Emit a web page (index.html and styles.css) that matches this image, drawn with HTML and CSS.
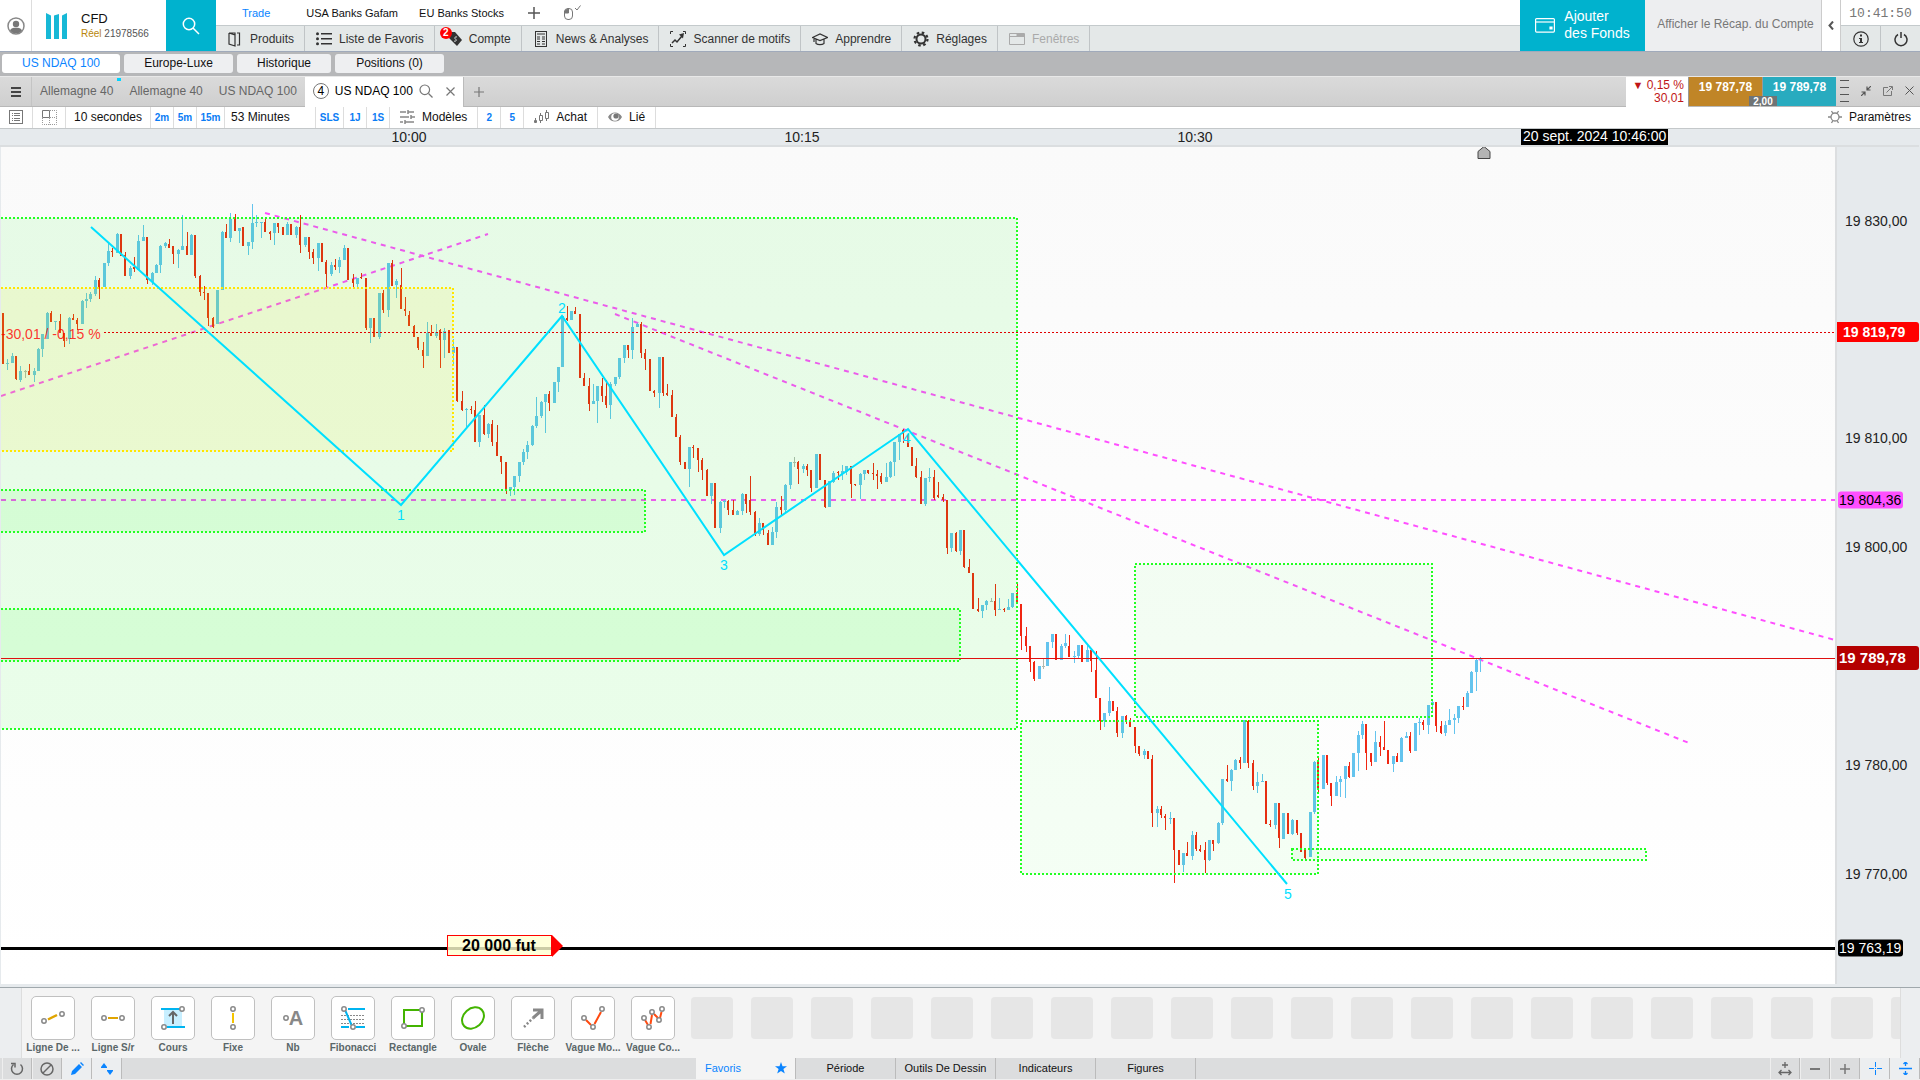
FILE: index.html
```html
<!DOCTYPE html>
<html lang="fr">
<head>
  <meta charset="UTF-8" />
  <meta name="viewport" content="width=device-width, initial-scale=1" />
  <title>CFD - US NDAQ 100</title>
  <link rel="stylesheet" href="styles.css">
</head>
<body>

  <header class="topbar">
    <button class="profile" aria-label="Profil">
      <svg width="18" height="18" viewBox="0 0 18 18"><circle cx="9" cy="9" r="8" fill="#fff" stroke="#888" stroke-width="1.5"/><circle cx="9" cy="7" r="3.2" fill="#777"/><path d="M3 13.5C4 11 6 10.800 9 10.800s5 .2 6 2.700C13.500 15.500 11.500 16.300 9 16.300S4.500 15.500 3 13.500z" fill="#777"/></svg>
    </button>
    <div class="account">
      <svg width="22" height="26" viewBox="0 0 22 26" fill="#17b8d6"><path d="M0 0l5 2.500V26H0zM8 2.500L13 1v25H8zM21 0l-5 2.500V26h5z"/></svg>
      <div>
        <div class="account-name">CFD</div>
        <div class="account-id"><span>Réel</span> 21978566</div>
      </div>
    </div>
    <button class="search-btn" aria-label="Rechercher">
      <svg width="18" height="18" viewBox="0 0 18 18" fill="none" stroke="#fff" stroke-width="1.500"><circle cx="7" cy="7" r="5.700"/><path d="M11 11l6 6"/></svg>
    </button>

    <div class="menus">
      <nav class="layouts">
        <a href="#" class="active">Trade</a>
        <a href="#">USA Banks Gafam</a>
        <a href="#">EU Banks Stocks</a>
        <button aria-label="Ajouter"><svg width="12" height="12" viewBox="0 0 12 12" stroke="#555" stroke-width="1.500"><path d="M6 0v12M0 6h12"/></svg></button>
        <button aria-label="Souris"><svg width="18" height="16" viewBox="0 0 18 16" fill="none" stroke="#777"><rect x="1.500" y="3.500" width="8" height="11" rx="3.500"/><path d="M5.500 3.500v4.500h-4V6z" fill="#777"/><path d="M12 3l2 2 3.500-4.500"/></svg></button>
      </nav>
      <nav class="main-nav">
        <a href="#"><svg width="16" height="16" viewBox="0 0 16 16" fill="none" stroke="#333" stroke-width="1.200"><path d="M2 2h6v11M2 2v11l6 2V4L2 2M10 2h2.500v12H10"/></svg>Produits</a>
        <a href="#"><svg width="16" height="16" viewBox="0 0 16 16" fill="#333"><path d="M5 2h11v1.500H5zM5 7h11v1.500H5zM5 12h11v1.500H5z"/><circle cx="1.500" cy="2.800" r="1.500"/><circle cx="1.500" cy="7.800" r="1.500"/><circle cx="1.500" cy="12.800" r="1.500"/></svg>Liste de Favoris</a>
        <a href="#" class="with-badge"><svg width="16" height="16" viewBox="0 0 16 16"><path d="M5 1h4l7 8-5 6-8-8z" fill="#333"/><path d="M11 6c-2-.5-3 1-1.500 2s.5 3-1.500 2" fill="none" stroke="#e4e8e8"/></svg><b class="badge">2</b>Compte</a>
        <a href="#"><svg width="16" height="16" viewBox="0 0 16 16" fill="none" stroke="#333"><rect x="2.500" y=".5" width="11" height="15"/><path d="M4 3h8M4 6h3M4 8h3M4 10.500h3M4 13h3M9 6h3M9 8h3M9 10.500h3M9 13h3" stroke-width="1.200"/></svg>News &amp; Analyses</a>
        <a href="#"><svg width="16" height="16" viewBox="0 0 16 16" fill="none" stroke="#333"><path d="M.5 3V.5H3M13 .5h2.500V3M.5 13v2.500H3M13 15.500h2.500V13" /><path d="M2 12l3-3 2 2 5-6" stroke-width="1.500"/><path d="M9 3.500l5-1.500-1 5.500z" fill="#333" stroke="none"/></svg>Scanner de motifs</a>
        <a href="#"><svg width="16" height="16" viewBox="0 0 16 16" fill="none" stroke="#333" stroke-width="1.200"><path d="M.5 6.500L8 3l7.500 3.500L8 9.500zM4 8v4.500c2 1.500 6 1.500 8 0V8M2 7v4"/></svg>Apprendre</a>
        <a href="#"><svg width="16" height="16" viewBox="0 0 16 16" fill="none" stroke="#333"><circle cx="8" cy="8" r="4.500" stroke-width="2"/><circle cx="8" cy="8" r="6.500" stroke-width="2.200" stroke-dasharray="2.550 2.550"/></svg>Réglages</a>
        <a href="#" class="disabled"><svg width="16" height="16" viewBox="0 0 16 16" fill="none" stroke="#aaa"><path d="M.5 2.500h15v11H.5zM.5 5.500h15"/><path d="M8 3h7v2H8z" fill="#aaa"/></svg>Fenêtres</a>
      </nav>
    </div>

    <button class="add-funds">
      <svg width="20" height="15" viewBox="0 0 20 15" fill="none" stroke="#fff" stroke-width="1.200"><rect x=".6" y=".6" width="18.800" height="13.500" rx="1"/><path d="M.6 4h18.800"/><path d="M15 9h2v2h-2z" fill="#fff"/></svg>
      <span>Ajouter<br>des Fonds</span>
    </button>
    <button class="summary">Afficher le Récap. du Compte</button>
    <button class="collapse" aria-label="Réduire"><svg width="6" height="9" viewBox="0 0 6 9" fill="none" stroke="#555" stroke-width="2"><path d="M5 .5L1.500 4.500 5 8.500"/></svg></button>
    <div class="system">
      <time class="clock">10:41:50</time>
      <div class="system-btns">
        <button aria-label="Informations"><svg width="16" height="16" viewBox="0 0 16 16"><circle cx="8" cy="8" r="7.200" fill="none" stroke="#333" stroke-width="1.200"/><path d="M7 3.500h2v2H7zM6 7h3v4h1v1H6v-1h1V8H6z" fill="#333"/></svg></button>
        <button aria-label="Déconnexion"><svg width="14" height="16" viewBox="0 0 14 16" fill="none" stroke="#333" stroke-width="1.500"><path d="M4 3.500a6 6 0 1 0 6 0M7 1v6"/></svg></button>
      </div>
    </div>
  </header>

  <nav class="workspaces">
    <a href="#" class="active ws-a">US NDAQ 100</a>
    <a href="#" class="ws-b">Europe-Luxe</a>
    <a href="#" class="ws-c">Historique</a>
    <a href="#" class="ws-b">Positions (0)</a>
  </nav>

  <div class="tabs">
    <button class="burger" aria-label="Menu"><svg width="10" height="10" viewBox="0 0 10 10" stroke="#444" stroke-width="2"><path d="M0 1h10M0 5h10M0 9h10"/></svg></button>
    <a href="#" class="tab marked">Allemagne 40</a>
    <a href="#" class="tab">Allemagne 40</a>
    <a href="#" class="tab">US NDAQ 100</a>
    <div class="tab current">
      <span class="count">4</span>US NDAQ 100
      <svg width="14" height="14" viewBox="0 0 14 14" fill="none" stroke="#777" stroke-width="1.200"><circle cx="5.800" cy="5.800" r="4.800"/><path d="M9.500 9.500l4 4"/></svg>
      <button aria-label="Fermer"><svg width="9" height="9" viewBox="0 0 9 9" stroke="#777" stroke-width="1.200"><path d="M.5.5l8 8M8.500.5l-8 8"/></svg></button>
    </div>
    <button class="new-tab" aria-label="Nouvel onglet"><svg width="10" height="10" viewBox="0 0 10 10" stroke="#777" stroke-width="1.200"><path d="M5 0v10M0 5h10"/></svg></button>
    <div class="quote">
      <div class="change"><span>▼</span> 0,15 %<br>30,01</div>
      <button class="sell">19 787,78</button>
      <button class="buy">19 789,78</button>
      <span class="spread">2,00</span>
    </div>
    <div class="window-btns">
      <svg width="9" height="22" viewBox="0 0 9 22" stroke="#555"><path d="M0 .5h9M0 7.500h9M0 14.500h9M0 21.500h9"/></svg>
      <button aria-label="Réduire"><svg width="10" height="10" viewBox="0 0 10 10" fill="none" stroke="#555" stroke-width="1.200"><path d="M10 0L6 4M6 .5V4h3.500M0 10l4-4M.5 6H4v3.500"/></svg></button>
      <button aria-label="Détacher"><svg width="10" height="10" viewBox="0 0 10 10" fill="none" stroke="#777"><path d="M5 1.500H.5v8h8V5M3.500 6.500L9 1M6 .5h3.500V4"/></svg></button>
      <button aria-label="Fermer"><svg width="9" height="9" viewBox="0 0 9 9" stroke="#555"><path d="M.5.5l8 8M8.500.5l-8 8"/></svg></button>
    </div>
  </div>

  <div class="toolbar">
    <button class="w-32" aria-label="Liste"><svg width="14" height="14" viewBox="0 0 14 14" fill="none" stroke="#777"><rect x=".5" y=".5" width="13" height="13"/><path d="M3 3.500h1M3 5.500h1M3 8.500h1M3 10.500h1M5 3.500h6M5 5.500h6M5 8.500h6M5 10.500h6"/></svg></button>
    <button class="w-32" aria-label="Grille"><svg width="15" height="15" viewBox="0 0 15 15" fill="none" stroke="#999"><path d="M.5.5h7v7h-7z" stroke="#777"/><path d="M8 .5h6.500v14H.5V8M8 7.500h6.500M7.500 8v6.500" stroke-dasharray="1 1"/></svg></button>
    <button class="period">10 secondes</button>
    <button class="short">2m</button>
    <button class="short">5m</button>
    <button class="short w-28">15m</button>
    <button class="period wide">53 Minutes</button>
    <button class="short w-28">SLS</button>
    <button class="short">1J</button>
    <button class="short">1S</button>
    <button class="tool"><svg width="15" height="14" viewBox="0 0 15 14" stroke="#888" stroke-width="1.500"><path d="M0 2h6M8 2h6M8 0v4M0 7h9M11 7h4M11 5v4M0 12h3M5 12h9M5 10v4"/></svg>Modèles</button>
    <button class="short">2</button>
    <button class="short">5</button>
    <button class="tool"><svg width="15" height="14" viewBox="0 0 15 14" fill="none" stroke="#777"><path d="M1.500 8v5M.5 10.500h2v2h-2zM6.500 3v2M6.500 11v2M5.500 5.500h3v5h-3zM12.500 0v2M12.500 9v2M11.500 2.500h3v6h-3z"/></svg>Achat</button>
    <button class="tool"><svg width="14" height="12" viewBox="0 0 14 12"><path d="M0 6c3-6 11-6 14 0-3 6-11 6-14 0z" fill="#888"/><circle cx="7" cy="6" r="3.800" fill="#fff"/><circle cx="8" cy="5" r="2.600" fill="#777"/></svg>Lié</button>
    <button class="settings"><svg width="14" height="14" viewBox="0 0 14 14" fill="none" stroke="#888" stroke-width="1.300"><circle cx="7" cy="7" r="4"/><path d="M0 7h3M11 7h3M3.500 1l1.500 2.500M10.500 1L9 3.500M3.500 13L5 10.500M10.500 13L9 10.500"/></svg>Paramètres</button>
  </div>

  <main class="chart">
    <svg id="time-axis" class="time-axis"></svg>
    <svg id="plot" class="plot"></svg>
    <svg id="price-axis" class="price-axis"></svg>
  </main>

  <section class="drawing-tools">
    <button class="draw-tool"><span><svg width="34" height="34" viewBox="0 0 34 34" fill="none" stroke="#888" stroke-width="1.500"><path d="M12 18.500l9-4.500" stroke="#e0a400" stroke-width="2.500"/><circle cx="8" cy="20" r="2.200"/><circle cx="26" cy="13" r="2.200"/></svg></span>Ligne De ...</button>
    <button class="draw-tool"><span><svg width="34" height="34" viewBox="0 0 34 34" fill="none" stroke="#888" stroke-width="1.500"><path d="M12 17h10" stroke="#e0a400" stroke-width="2"/><circle cx="8" cy="17" r="2.200"/><circle cx="26" cy="17" r="2.200"/></svg></span>Ligne S/r</button>
    <button class="draw-tool"><span><svg width="34" height="34" viewBox="0 0 34 34" fill="none" stroke="#888" stroke-width="1.500"><path d="M8 8h18v18H8z" fill="#c8efff" stroke="none"/><path d="M5 8h19M11 26h18" stroke="#00b4f0" stroke-width="2"/><path d="M17 23V11M13 15l4-4 4 4" stroke="#666" stroke-width="2"/><circle cx="26" cy="8" r="2.200" fill="#fff"/><circle cx="8" cy="26" r="2.200" fill="#fff"/></svg></span>Cours</button>
    <button class="draw-tool"><span><svg width="34" height="34" viewBox="0 0 34 34" fill="none" stroke="#888" stroke-width="1.500"><path d="M17 12v10" stroke="#f5c400" stroke-width="2"/><circle cx="17" cy="8" r="2.200"/><circle cx="17" cy="26" r="2.200"/></svg></span>Fixe</button>
    <button class="draw-tool"><span class="letter"><svg width="6" height="6" viewBox="0 0 6 6" fill="none" stroke="#888" stroke-width="1.500"><circle cx="3" cy="3" r="2.200"/></svg>A</span>Nb</button>
    <button class="draw-tool"><span><svg width="34" height="34" viewBox="0 0 34 34" fill="none" stroke="#888" stroke-width="1.500"><path d="M11 14.500h18M5 18.500h24M5 22.500h24M5 14.500h5" stroke-width="1" stroke-dasharray="2 1"/><path d="M12 8h17M5 26h8M20 26h9M9.500 10l6 14" stroke="#00b4f0" stroke-width="2"/><circle cx="8" cy="8" r="2.200"/><circle cx="17" cy="26" r="2.200"/></svg></span>Fibonacci</button>
    <button class="draw-tool"><span><svg width="34" height="34" viewBox="0 0 34 34" fill="none" stroke="#888" stroke-width="1.500"><path d="M8 9h18v16H8z" stroke="#43b400" stroke-width="2"/><circle cx="26" cy="9" r="2.200" fill="#fff"/><circle cx="8" cy="25" r="2.200" fill="#fff"/></svg></span>Rectangle</button>
    <button class="draw-tool"><span><svg width="34" height="34" viewBox="0 0 34 34" fill="none" stroke="#43b400" stroke-width="2"><ellipse cx="17" cy="17" rx="12" ry="9.500" transform="rotate(-42 17 17)"/></svg></span>Ovale</button>
    <button class="draw-tool"><span><svg width="34" height="34" viewBox="0 0 34 34" fill="none" stroke="#888" stroke-width="3"><path d="M8 26l9-9" stroke-dasharray="2 2" stroke-width="2.500"/><path d="M17 17l8-7M17 9h9v9"/></svg></span>Flèche</button>
    <button class="draw-tool"><span><svg width="34" height="34" viewBox="0 0 34 34" fill="none" stroke="#888" stroke-width="1.500"><path d="M10 19l5 5M18.500 23L25 11" stroke="#ff4a10" stroke-width="2"/><circle cx="8" cy="17" r="2.200"/><circle cx="17" cy="26" r="2.200"/><circle cx="26" cy="8" r="2.200"/></svg></span>Vague Mo...</button>
    <button class="draw-tool"><span><svg width="34" height="34" viewBox="0 0 34 34" fill="none" stroke="#888" stroke-width="1.500"><path d="M9 19l3 5M14.500 23l1.500-9M18 13l4 4M24 17l1.500-6" stroke="#ff4a10" stroke-width="2"/><circle cx="8" cy="17" r="2.200"/><circle cx="13" cy="26" r="2.200"/><circle cx="16" cy="11" r="2.200"/><circle cx="23" cy="19" r="2.200"/><circle cx="26" cy="8" r="2.200"/></svg></span>Vague Co...</button>
    <div class="empty-slots">
      <i></i><i></i><i></i><i></i><i></i><i></i><i></i><i></i><i></i><i></i><i></i>
      <i></i><i></i><i></i><i></i><i></i><i></i><i></i><i></i><i></i><i></i>
    </div>
  </section>

  <footer class="bottombar">
    <button aria-label="Rétablir"><svg width="14" height="14" viewBox="0 0 14 14" fill="none" stroke="#666" stroke-width="1.500"><path d="M10.500 2.500a5.500 5.500 0 1 1-7 0M1 1.500h4v4"/></svg></button>
    <button aria-label="Effacer"><svg width="14" height="14" viewBox="0 0 14 14" fill="none" stroke="#666" stroke-width="1.500"><circle cx="7" cy="7" r="6"/><path d="M3 11l8-8"/></svg></button>
    <button class="on" aria-label="Dessiner"><svg width="14" height="14" viewBox="0 0 14 14" fill="#0a84ff"><path d="M1 13l1-4 7-7 3 3-7 7zM10 1l1-1 3 3-1 1z"/></svg></button>
    <button class="on" aria-label="Décaler"><svg width="12" height="12" viewBox="0 0 12 12" fill="#0a84ff"><path d="M0 4l3-4 3 4v1H0zM6 8h6l-3 4zM6 7h6v1H6z"/></svg></button>
    <nav class="tool-tabs">
      <a href="#" class="active">Favoris<svg width="12" height="12" viewBox="0 0 12 12" fill="#0a84ff"><path d="M6 0l1.500 4.200H12L8.400 7l1.400 4.600L6 9l-3.800 2.600L3.600 7 0 4.200h4.500z"/></svg></a>
      <a href="#">Période</a>
      <a href="#">Outils De Dessin</a>
      <a href="#">Indicateurs</a>
      <a href="#">Figures</a>
    </nav>
    <button aria-label="Ajuster"><svg width="14" height="14" viewBox="0 0 14 14" fill="none" stroke="#666" stroke-width="1.300"><path d="M7 0v6M4 3h6M1 10.500h12M3.500 8L1 10.500 3.500 13M10.500 8l2.500 2.500-2.500 2.500"/></svg></button>
    <button aria-label="Zoom arrière"><svg width="10" height="10" viewBox="0 0 10 10" stroke="#777" stroke-width="2"><path d="M0 5h10"/></svg></button>
    <button aria-label="Zoom avant"><svg width="10" height="10" viewBox="0 0 10 10" stroke="#777" stroke-width="1.500"><path d="M0 5h10M5 0v10"/></svg></button>
    <button class="on" aria-label="Réticule"><svg width="13" height="13" viewBox="0 0 13 13" stroke="#0a84ff"><path d="M6.500 0v5M6.500 8v5M0 6.500h5M8 6.500h5M6 6.500h1"/></svg></button>
    <button class="on" aria-label="Échelle"><svg width="13" height="13" viewBox="0 0 13 13" fill="none" stroke="#0a84ff"><path d="M0 6.500h13M6.500 0v4M6.500 9v4M4.500 2l2-2 2 2M4.500 11l2 2 2-2" stroke-width="1.300"/></svg></button>
  </footer>

  <script src="chart.js"></script>
</body>
</html>
```
FILE: styles.css
```css
* {
  margin: 0;
  padding: 0;
  box-sizing: border-box;
}

body {
  height: 100vh;
  display: flex;
  flex-direction: column;
  overflow: hidden;
  background: #eceef0;
  font-family: "Liberation Sans", Arial, sans-serif;
  font-size: 12px;
  color: #111;
}

button {
  border: none;
  background: none;
  font: inherit;
  color: inherit;
  cursor: pointer;
  display: flex;
  align-items: center;
  justify-content: center;
}

a {
  color: inherit;
  text-decoration: none;
}

svg {
  flex: none;
}

/* Top bar */
.topbar {
  display: flex;
  flex: none;
  height: 52px;
  background: #fff;
  border-bottom: 1px solid #a0aabb;
}

.profile {
  width: 32px;
  border-right: 1px solid #ddd;
}

.account {
  width: 134px;
  padding: 0 0 0 14px;
  display: flex;
  align-items: center;
  gap: 13px;
}

.account-name {
  font-size: 13px;
  line-height: 16px;
}

.account-id {
  font-size: 10px;
  line-height: 14px;
  color: #555;
}

.account-id span {
  color: #b8860b;
}

.search-btn {
  width: 50px;
  background: #00b2ce;
}

.menus {
  flex: 1;
  display: flex;
  flex-direction: column;
}

.layouts {
  height: 25px;
  display: flex;
  align-items: center;
  padding-left: 26px;
  font-size: 11px;
}

.layouts a {
  margin-right: 21px;
}

.layouts .active {
  color: #0a84ff;
  margin-right: 36px;
}

.layouts button {
  margin: 0 20px 0 3px;
}

.main-nav {
  flex: 1;
  display: flex;
  background: #e4e8e8;
  border-top: 1px solid #c4cacc;
}

.main-nav a {
  display: flex;
  align-items: center;
  gap: 7px;
  padding: 0 10px 0 11px;
  border-right: 1px solid #c0c4c6;
  color: #333;
  position: relative;
}

.main-nav .disabled {
  color: #aaa;
}

.badge {
  position: absolute;
  left: 5px;
  top: 1px;
  width: 12px;
  height: 12px;
  border-radius: 50%;
  background: #f00;
  color: #fff;
  font-size: 10px;
  line-height: 12px;
  text-align: center;
}

.add-funds {
  width: 125px;
  background: #00b2ce;
  color: #fff;
  font-size: 14px;
  line-height: 17px;
  text-align: left;
  gap: 9px;
}

.add-funds span {
  padding-bottom: 2px;
}

.summary {
  width: 177px;
  padding: 0 0 3px 5px;
  background: #edeef0;
  color: #777;
  border-right: 1px solid #ccc;
}

.collapse {
  width: 19px;
  border-right: 1px solid #ccc;
}

.system {
  width: 79px;
  display: flex;
  flex-direction: column;
}

.clock {
  height: 25px;
  line-height: 27px;
  text-align: center;
  font-family: "Liberation Mono", monospace;
  font-size: 13px;
  color: #777;
}

.system-btns {
  flex: 1;
  display: flex;
  border-top: 1px solid #c4cacc;
  background: #e4e8e8;
}

.system-btns button {
  flex: 1;
}

.system-btns button + button {
  border-left: 1px solid #c0c4c6;
}

/* Workspaces */
.workspaces {
  flex: none;
  height: 24px;
  padding: 2px 2px 3px;
  display: flex;
  gap: 4px;
  background: #b6b7b9;
}

.workspaces a {
  display: flex;
  align-items: center;
  justify-content: center;
  padding-bottom: 1px;
  background: #eeeff1;
  border-radius: 3px;
}

.workspaces .active {
  background: #fff;
  color: #0a84ff;
}

.ws-a { width: 118px; }
.ws-b { width: 109px; }
.ws-c { width: 94px; }

/* Chart tabs */
.tabs {
  flex: none;
  height: 31px;
  display: flex;
  background: linear-gradient(#dadada, #cfcfcf);
  border-top: 1px solid #e8e8e8;
  border-bottom: 1px solid #b8b8b8;
}

.burger {
  width: 32px;
  border-right: 1px solid #c4c4c4;
}

.tab {
  display: flex;
  align-items: center;
  padding: 0 8px 2px;
  color: #666;
  white-space: nowrap;
  position: relative;
}

.marked::before {
  content: "";
  position: absolute;
  right: 0;
  top: 1px;
  width: 4px;
  height: 3px;
  background: #00d4ff;
}

.current {
  gap: 6px;
  padding-right: 0;
  background: #fff;
  color: #000;
  margin-bottom: -1px;
  border-right: 1px solid #bbb;
}

.current button {
  width: 24px;
}

.count {
  width: 16px;
  height: 16px;
  border: 1px solid #777;
  border-radius: 50%;
  line-height: 14px;
  text-align: center;
}

.new-tab {
  width: 31px;
}

.quote {
  margin-left: auto;
  display: flex;
  position: relative;
}

.change {
  width: 62px;
  padding: 2px 4px 0 0;
  background: #fff;
  margin-bottom: -1px;
  text-align: right;
  line-height: 13px;
  color: #c01616;
}

.change span {
  font-size: 11px;
}

.sell, .buy {
  width: 74px;
  padding-bottom: 10px;
  color: #fff;
  font-weight: bold;
  border-left: 1px solid #999;
}

.sell { background: #c08527; }
.buy { background: #28abbf; }

.spread {
  position: absolute;
  left: 123px;
  bottom: 0;
  width: 28px;
  height: 10px;
  background: #6f7476;
  color: #fff;
  font-size: 10px;
  font-weight: bold;
  line-height: 11px;
  text-align: center;
}

.window-btns {
  width: 84px;
  padding: 0 0 2px 4px;
  display: flex;
  align-items: center;
  gap: 12px;
}

/* Toolbar */
.toolbar {
  flex: none;
  height: 22px;
  display: flex;
  background: #fff;
  border-bottom: 1px solid #c4c8ca;
}

.toolbar button {
  border-right: 1px solid #ddd;
  padding-bottom: 1px;
}

.toolbar .short {
  width: 23px;
  font-size: 10px;
  font-weight: bold;
  color: #0a7cf5;
}

.toolbar .w-32 { width: 33px; }
.toolbar .w-28 { width: 28px; }

.toolbar .period {
  width: 85px;
}

.toolbar .wide {
  width: 91px;
  justify-content: flex-start;
  padding-left: 6px;
}

.toolbar .tool {
  gap: 7px;
  padding: 0 10px 1px;
}

.toolbar .settings {
  margin-left: auto;
  padding-right: 9px;
  gap: 7px;
  border: none;
}

/* Chart */
.chart {
  flex: 1;
  min-height: 0;
  display: grid;
  grid-template: 18px 1fr / 1fr 84px;
  background: #e6eaed;
  border-bottom: 1px solid #a0a8ac;
  padding: 0 1px 3px 0;
}

.chart svg {
  width: 100%;
  height: 100%;
  display: block;
  font-size: 14px;
}

.time-axis {
  grid-column: 1 / 3;
  border-bottom: 2px solid #dbdee0;
}

.plot {
  background: linear-gradient(#fafafa, #fff);
  border-left: 1px solid #e6eaed;
}

.price-axis {
  border-left: 2px solid #dcdee0;
}

/* Drawing tools */
.drawing-tools {
  flex: none;
  height: 70px;
  margin: 0 19px 0 21px;
  padding: 8px 0 0 2px;
  display: flex;
  overflow: hidden;
  background: #f4f4f4;
  border: 1px solid #ddd;
  border-width: 0 1px;
}

.draw-tool {
  flex: none;
  width: 60px;
  height: 62px;
  padding-right: 2px;
  flex-direction: column;
  justify-content: flex-start;
  gap: 2px;
  font-size: 10px;
  font-weight: bold;
  line-height: 12px;
  color: #5a6668;
  white-space: nowrap;
}

.draw-tool span {
  width: 44px;
  height: 44px;
  display: flex;
  align-items: center;
  justify-content: center;
  border: 1px solid #c0c0c0;
  border-radius: 5px;
  background: #fff;
}

.draw-tool .letter {
  font-size: 20px;
  color: #888;
}

.empty-slots {
  display: flex;
  gap: 18px;
  padding: 1px 0 0 7px;
}

.empty-slots i {
  width: 42px;
  height: 42px;
  border-radius: 4px;
  background: #e6e6e6;
}

/* Bottom bar */
.bottombar {
  flex: none;
  height: 22px;
  padding-left: 2px;
  display: flex;
  background: #dcddde;
  border-bottom: 1px solid #eee;
  font-size: 11px;
}

.bottombar button {
  width: 30px;
  border-right: 1px solid #bbb;
  border-left: 1px solid #eee;
}

.bottombar .on {
  background: #eceef0;
}

.tool-tabs {
  flex: 1;
  display: flex;
  justify-content: center;
}

.tool-tabs a {
  width: 100px;
  display: flex;
  align-items: center;
  justify-content: center;
  padding-bottom: 1px;
  border-right: 1px solid #bbb;
}

.tool-tabs .active {
  justify-content: space-between;
  padding: 0 8px 1px 9px;
  background: #f4f4f4;
  color: #0a84ff;
}
```
FILE: chart.js
```js
const NS = 'http://www.w3.org/2000/svg';

// size of the grid the values below are given in
const GRID_W = 1834;
const GRID_H = 837;

const BLUE = '#64c4ee';
const RED = '#f02612';
const GREEN = '#22ff22';
const PINK = '#ff4fff';

// one candle every 10 seconds: direction, high, body top, body bottom, low
const candles = `
r 166 166 217 217,b 212 216 217 223,b 206 209 216 216,r 209 209 232 233,b 219 224 233 235,g 223 224 225 231,
r 217 224 228 228,b 221 224 228 235,b 201 202 224 224,b 187 187 202 210,b 165 166 192 192,r 164 166 175 175,
b 174 174 175 183,r 167 174 186 186,r 186 186 194 200,b 170 171 192 197,r 167 171 173 173,r 171 173 177 183,
b 153 154 177 177,b 146 152 154 161,b 145 147 152 155,b 129 133 147 149,r 131 133 140 152,b 116 116 140 140,
b 95 104 116 119,r 101 104 105 110,b 86 87 106 106,r 87 87 109 109,r 105 108 129 129,b 119 121 129 132,
r 110 120 122 125,b 88 94 123 123,b 78 90 94 94,r 90 90 133 137,b 125 126 135 138,b 117 118 126 126,
b 98 99 118 126,b 95 96 99 101,r 92 97 101 101,r 99 99 107 117,b 102 103 107 121,b 68 99 103 103,
r 85 99 108 108,b 87 88 108 108,r 88 88 129 131,r 128 129 145 149,r 139 145 146 153,r 146 146 171 179,
r 170 171 180 181,b 143 143 177 177,b 84 85 143 143,r 77 85 91 91,b 66 72 91 95,r 67 72 84 84,
b 81 81 84 96,r 80 80 99 99,b 95 95 99 108,b 57 76 95 102,b 68 75 76 80,b 75 75 76 91,
r 71 75 85 85,r 84 85 87 93,b 76 76 86 98,r 76 76 80 86,r 80 80 88 88,b 75 77 88 88,
r 77 77 88 88,b 79 80 88 91,r 68 80 98 106,b 90 90 98 100,r 90 90 105 112,r 102 105 111 117,
b 96 96 111 124,r 96 96 115 115,r 113 115 127 140,b 115 118 127 129,r 112 118 120 123,b 110 113 120 126,
b 98 101 113 113,r 101 101 133 133,r 127 132 136 140,b 131 131 137 142,r 126 130 131 132,r 131 131 181 183,
b 171 171 181 196,r 171 171 190 190,b 146 146 190 192,r 143 146 163 166,b 116 116 163 170,r 113 116 139 139,
b 132 134 138 151,r 121 138 162 162,r 150 162 164 169,r 164 168 179 179,r 178 179 190 190,r 190 190 201 203,
r 195 203 209 221,b 175 186 209 209,r 178 186 189 189,b 177 185 189 191,r 182 183 193 221,b 181 184 193 211,
r 183 183 206 206,b 192 200 206 219,r 200 200 254 255,r 244 254 263 264,b 261 262 263 282,r 259 262 263 267,
r 254 263 295 295,b 268 268 295 300,r 258 268 287 288,b 276 277 287 291,r 273 277 295 299,r 278 295 309 309,
r 309 309 315 327,r 315 315 343 347,b 340 340 343 349,b 329 329 340 348,b 315 315 329 335,b 302 305 315 318,
b 294 298 305 312,b 278 279 298 299,b 250 269 279 281,b 254 255 269 271,b 247 247 255 286,r 244 247 256 264,
b 235 235 256 256,b 220 220 235 245,b 169 169 220 220,r 159 171 173 174,b 164 164 173 173,r 160 164 167 167,
r 167 167 231 231,r 226 231 239 239,r 231 239 257 264,b 237 254 257 257,b 239 239 254 276,r 231 239 249 255,
r 233 249 258 261,b 235 237 258 272,b 230 230 237 239,b 211 211 230 232,b 198 198 211 216,r 198 198 203 211,
b 171 180 203 212,b 176 177 180 180,r 175 177 206 211,r 202 206 212 223,r 212 212 244 244,r 243 244 246 250,
b 210 210 246 261,r 210 210 246 249,r 237 246 248 249,r 243 248 270 270,r 267 270 290 290,r 288 290 315 318,
r 315 315 322 322,b 300 300 322 340,r 298 300 301 311,r 301 301 313 325,r 311 313 323 333,r 322 323 349 349,
b 336 336 349 357,r 336 336 381 381,b 354 355 381 386,b 353 354 355 361,r 353 354 363 368,r 353 363 368 368,
b 363 364 368 368,b 346 347 364 368,r 347 347 357 366,r 329 353 365 368,r 364 365 387 389,b 371 376 387 389,
r 376 376 383 388,r 383 386 398 398,b 380 385 398 398,b 355 360 385 391,r 349 360 363 368,b 337 338 363 365,
b 315 315 338 342,g 310 315 316 320,r 314 315 322 337,b 317 319 322 326,r 317 319 323 329,r 323 323 341 345,
b 307 307 341 341,r 307 307 333 333,r 333 333 360 361,b 334 334 360 360,b 324 326 335 336,r 324 325 326 333,
b 318 324 327 333,b 319 319 325 328,r 319 319 337 351,r 337 337 338 339,b 326 327 338 352,b 323 323 327 333,
r 323 323 326 327,r 316 326 327 333,r 323 327 329 342,r 326 329 335 337,b 316 330 335 335,b 314 315 330 331,
b 295 295 315 329,b 287 287 295 313,r 282 283 287 296,r 287 287 300 300,r 300 300 319 319,r 311 319 330 331,
r 324 330 357 357,b 331 331 357 359,b 321 330 331 335,r 323 330 351 353,r 335 348 350 351,r 347 350 353 355,
r 353 353 401 407,b 386 386 401 405,r 385 386 404 405,b 383 383 404 408,r 383 383 420 421,r 412 420 426 426,
r 426 426 462 462,r 451 462 464 465,b 458 458 464 471,b 453 454 458 463,g 451 454 455 455,r 437 454 463 469,
b 451 462 463 463,r 461 462 463 465,b 452 460 463 463,b 446 446 460 461,r 437 446 455 457,r 457 457 489 503,
r 480 489 499 505,r 499 499 515 525,r 514 515 532 534,b 519 519 532 532,g 512 519 520 522,b 495 495 519 519,
b 487 487 495 501,r 487 487 513 513,b 497 499 513 513,b 487 496 499 501,r 488 499 510 510,b 504 509 510 516,
b 498 498 509 511,r 498 498 515 515,b 498 503 515 515,r 503 503 514 525,r 504 523 551 551,r 551 551 574 583,
b 566 566 574 580,b 540 554 566 569,r 554 554 564 564,r 560 564 586 590,b 569 569 586 591,r 568 569 573 577,
r 571 574 580 580,r 580 580 599 606,r 599 599 607 609,b 602 604 608 612,r 604 604 612 612,r 608 612 666 680,
b 659 662 666 680,r 659 662 668 671,r 667 669 671 683,b 665 671 672 677,r 671 671 703 736,r 703 703 718 718,
b 706 706 718 725,r 695 706 709 709,b 684 688 709 713,r 685 688 702 704,r 698 702 704 705,r 695 703 713 726,
b 693 693 713 714,r 693 693 697 704,b 675 676 696 697,b 632 632 676 678,r 618 632 634 635,b 622 623 634 644,
b 612 613 623 623,r 610 613 616 622,b 573 573 616 616,r 573 574 616 621,r 613 616 639 643,b 625 635 639 646,
b 627 634 635 635,r 634 634 677 677,r 673 677 678 680,b 656 656 678 682,r 656 656 691 701,b 666 666 692 692,
r 666 666 687 687,b 672 673 687 688,r 673 673 686 688,r 686 686 705 705,r 701 703 711 712,b 665 665 710 710,
b 614 615 665 667,r 610 615 642 645,b 608 608 642 642,r 608 608 636 638,r 636 636 649 659,b 629 635 649 649,
b 629 632 635 650,b 619 619 632 651,r 615 619 630 631,b 606 606 630 630,b 584 588 606 624,b 574 577 588 592,
r 577 577 606 623,r 606 606 615 619,b 584 595 615 615,r 589 595 600 609,r 574 600 603 603,r 603 603 617 617,
b 609 609 617 625,r 606 609 615 615,b 590 591 615 615,b 585 589 591 591,r 585 589 604 606,b 576 576 604 604,
b 571 575 576 588,r 573 575 578 583,b 558 558 578 587,b 554 555 558 566,r 555 555 579 585,r 574 579 586 587,
b 574 578 586 589,b 562 573 578 578,b 567 571 573 587,b 559 559 571 576,r 550 559 560 563,b 544 546 560 560,
b 524 525 546 546,b 512 513 525 544,b 510 512 513 525`.trim().split(/,\s*/).map(row => {
  const [dir, ...values] = row.split(' ');
  return [dir, ...values.map(Number)];
});

// left, top, right, bottom, colour, fill opacity
const zones = [
  [-4, 71, 1016, 582, GREEN, 0.08],
  [-4, 141, 452, 304, '#ffe600', 0.1],
  [-4, 343, 644, 385, GREEN, 0.08],
  [-4, 462, 959, 514, GREEN, 0.08],
  [1134, 417, 1431, 570, GREEN, 0.04],
  [1020, 574, 1317, 727, GREEN, 0.04],
  [1291, 702, 1645, 713, GREEN, 0.04]
];

const trends = [
  [0, 249, 487, 87],
  [264, 66, 1834, 493],
  [614, 167, 1688, 596],
  [0, 353, 1834, 353]
];

const wave = [[90, 80], [400, 358], [561, 169], [723, 408], [907, 282], [1286, 737]];
const waveLabels = [[400, 373, '1'], [561, 166, '2'], [723, 423, '3'], [906, 296, '4'], [1287, 752, '5']];

const prices = [[74, '19 830,00'], [291, '19 810,00'], [400, '19 800,00'], [618, '19 780,00'], [727, '19 770,00']];
const times = [[409, '10:00'], [802, '10:15'], [1195, '10:30']];

function add(parent, tag, attrs, text) {
  const el = document.createElementNS(NS, tag);
  for (const key in attrs) el.setAttribute(key, attrs[key]);
  if (text) el.textContent = text;
  parent.appendChild(el);
  return el;
}

function drawPlot(plot, X, Y, w) {
  trends.forEach(([x1, y1, x2, y2]) => {
    add(plot, 'line', { x1: X(x1), y1: Y(y1), x2: X(x2), y2: Y(y2), stroke: PINK, 'stroke-width': 2, 'stroke-dasharray': '5 5' });
  });

  candles.forEach(([dir, high, top, bottom, low], i) => {
    const x = Math.round(X(2 + i * 4.37));
    const color = dir === 'b' ? BLUE : dir === 'r' ? RED : '#b0b8b0';
    const body = dir === 'r' ? 2 : 3;
    add(plot, 'rect', { x: x, y: Y(high), width: 1, height: Math.max(1, Y(low) - Y(high)), fill: color });
    add(plot, 'rect', { x: x - 1, y: Y(top), width: body, height: Math.max(1, Y(bottom) - Y(top)), fill: color });
  });

  zones.forEach(([x1, y1, x2, y2, color, opacity]) => {
    add(plot, 'rect', {
      x: X(x1), y: Y(y1), width: X(x2) - X(x1), height: Y(y2) - Y(y1),
      fill: color === GREEN ? '#00ff00' : '#ffdd00', 'fill-opacity': opacity,
      stroke: color, 'stroke-width': 2, 'stroke-dasharray': '2 2'
    });
  });

  add(plot, 'line', { x1: 103, y1: Y(185) + 0.5, x2: w, y2: Y(185) + 0.5, stroke: '#e00000', 'stroke-dasharray': '2 2' });
  add(plot, 'line', { x1: 0, y1: Y(511) + 0.5, x2: w, y2: Y(511) + 0.5, stroke: '#e01010' });
  add(plot, 'text', { x: 0, y: Y(192), fill: '#f00', 'fill-opacity': 0.8 }, '-30,01 / -0,15 %');

  add(plot, 'polyline', { points: wave.map(p => X(p[0]) + ',' + Y(p[1])).join(' '), fill: 'none', stroke: '#00e0ff', 'stroke-width': 2 });
  waveLabels.forEach(([x, y, label]) => {
    add(plot, 'text', { x: X(x), y: Y(y), fill: '#00dfff', 'text-anchor': 'middle' }, label);
  });

  // 20 000 fut level
  const x = X(446), y = Y(788);
  add(plot, 'rect', { x: 0, y: y + 12, width: w, height: 3 });
  add(plot, 'rect', { x: x + 0.5, y: y + 0.5, width: 104, height: 20, fill: '#ffffd0', 'fill-opacity': 0.8, stroke: '#f00' });
  add(plot, 'path', { d: `M${x + 105} ${y}l11 11l-11 11z`, fill: '#f00' });
  add(plot, 'text', { x: x + 52, y: y + 16, 'font-size': 16, 'font-weight': 'bold', 'text-anchor': 'middle' }, '20 000 fut');
}

function priceTag(axis, y, label, opts) {
  add(axis, 'rect', { x: opts.x, y: y - opts.h / 2, width: opts.w, height: opts.h, rx: 3, fill: opts.fill });
  add(axis, 'text', { x: opts.tx, y: y + 5, fill: opts.color, 'font-size': opts.size, 'font-weight': opts.weight }, label);
}

function drawAxes(timeAxis, priceAxis, X, Y) {
  times.forEach(([x, label]) => {
    add(timeAxis, 'text', { x: X(x), y: 13, fill: '#222', 'text-anchor': 'middle' }, label);
  });
  add(timeAxis, 'rect', { x: X(1521), y: 0, width: 147, height: 16 });
  add(timeAxis, 'text', { x: X(1523), y: 12, fill: '#fff' }, '20 sept. 2024 10:46:00');

  prices.forEach(([y, label]) => {
    add(priceAxis, 'text', { x: 8, y: Y(y) + 5, fill: '#222' }, label);
  });
  priceTag(priceAxis, Y(185), '19 819,79', { x: -2, w: 84, h: 20, tx: 6, fill: '#f00', color: '#fff', size: 14, weight: 'bold' });
  priceTag(priceAxis, Y(353), '19 804,36', { x: 1, w: 65, h: 17, tx: 2, fill: '#ff4fff', color: '#000', size: 14, weight: 'normal' });
  priceTag(priceAxis, Y(511), '19 789,78', { x: -2, w: 84, h: 24, tx: 2, fill: '#b40000', color: '#fff', size: 15, weight: 'bold' });
  priceTag(priceAxis, Y(801), '19 763,19', { x: 1, w: 65, h: 17, tx: 2, fill: '#000', color: '#fff', size: 14, weight: 'normal' });
}

function draw() {
  const plot = document.getElementById('plot');
  const timeAxis = document.getElementById('time-axis');
  const priceAxis = document.getElementById('price-axis');
  [plot, timeAxis, priceAxis].forEach(el => el.replaceChildren());

  const w = plot.clientWidth;
  const h = plot.clientHeight;
  const X = v => Math.round(v * w / GRID_W);
  const Y = v => Math.round(v * h / GRID_H);

  drawPlot(plot, X, Y, w);
  drawAxes(timeAxis, priceAxis, X, Y);

  // last session marker
  const x = X(1483);
  add(plot, 'path', { d: `M${x - 6} 11.5v-7l6-5l6 5v7z`, fill: '#b4b4b4', stroke: '#444' });
}

window.addEventListener('resize', draw);
draw();
```
